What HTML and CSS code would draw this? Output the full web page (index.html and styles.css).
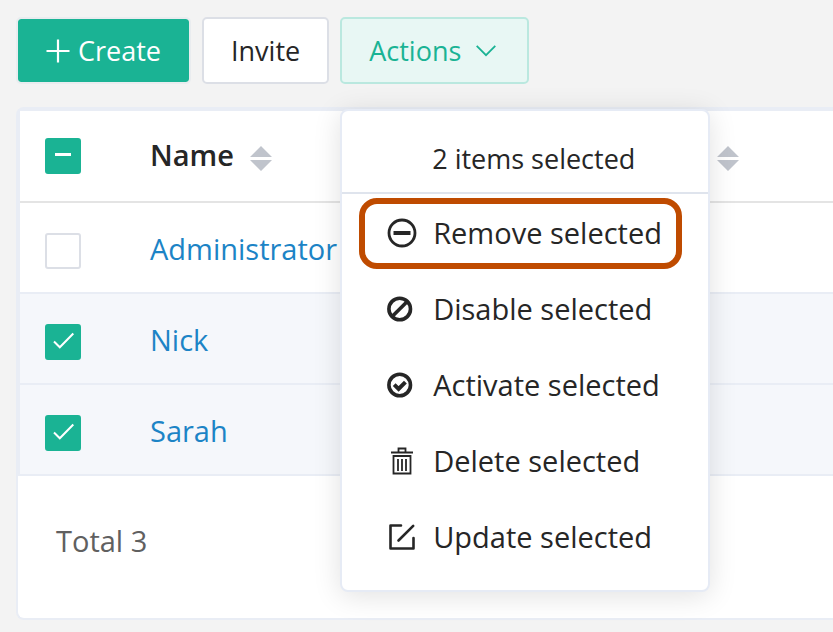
FILE: index.html
```html
<!DOCTYPE html>
<html lang="en">
<head>
<meta charset="utf-8">
<title>Users</title>
<link rel="stylesheet" href="styles.css">
</head>
<body>
<main class="page">
  <div class="toolbar">
    <button type="button" class="btn btn-primary">
      <svg width="24" height="24" viewBox="0 0 24 24" aria-hidden="true"><path d="M12 0.500V23.500M0.500 12H23.500" fill="none" stroke="currentColor" stroke-width="2.200"/></svg>
      Create
    </button>
    <button type="button" class="btn">Invite</button>
    <div class="dropdown">
      <button type="button" class="btn btn-active" aria-expanded="true">
        Actions
        <svg class="chevron" width="20" height="12" viewBox="0 0 20 12" aria-hidden="true"><path d="M.7.900 10 10.200 19.300.900" fill="none" stroke="currentColor" stroke-width="1.800"/></svg>
      </button>
      <div class="menu">
        <p class="menu-title">2 items selected</p>
        <ul class="menu-list">
          <li><button type="button" class="menu-item menu-item-marked">
            <svg class="icon" viewBox="0 0 30 30" aria-hidden="true"><circle cx="15" cy="15" r="13" fill="none" stroke="currentColor" stroke-width="2.800"/><path d="M6.500 15h17" stroke="currentColor" stroke-width="4"/></svg>
            Remove selected
          </button></li>
          <li><button type="button" class="menu-item">
            <svg class="icon" viewBox="0 0 30 30" aria-hidden="true"><circle cx="12.700" cy="15" r="10.800" fill="none" stroke="currentColor" stroke-width="3.600"/><path d="M5.400 22.300 20 7.700" stroke="currentColor" stroke-width="3.600"/></svg>
            Disable selected
          </button></li>
          <li><button type="button" class="menu-item">
            <svg class="icon" viewBox="0 0 30 30" aria-hidden="true"><circle cx="12.700" cy="15" r="10.800" fill="none" stroke="currentColor" stroke-width="3.600"/><path d="m7.200 14.600 4.400 4.300 6.800-6.800" fill="none" stroke="currentColor" stroke-width="4"/></svg>
            Activate selected
          </button></li>
          <li><button type="button" class="menu-item">
            <svg class="icon" viewBox="0 0 30 30" aria-hidden="true"><path d="M4 6.500h22M11.500 6V2.500h7V6M6.500 10h17v17.500h-17zM11 13v12M15 13v12M19 13v12" fill="none" stroke="currentColor" stroke-width="1.800"/></svg>
            Delete selected
          </button></li>
          <li><button type="button" class="menu-item">
            <svg class="icon" viewBox="0 0 30 30" aria-hidden="true"><path d="M14 3.500H3.500v23h23V16M11.500 18.500 26.200 3.800" fill="none" stroke="currentColor" stroke-width="2.600" stroke-linecap="round" stroke-linejoin="round"/></svg>
            Update selected
          </button></li>
        </ul>
      </div>
    </div>
  </div>

  <section class="card">
    <table class="table">
      <thead>
        <tr>
          <th class="col-check"><input type="checkbox" class="check check-mixed" aria-label="Select all"></th>
          <th class="col-name"><button type="button" class="sort">Name <svg width="22" height="25" viewBox="0 0 22 25" aria-hidden="true"><path d="M11 0 22 11H0zM0 14h22L11 25z" fill="#c0c4cc"/></svg></button></th>
          <th><button type="button" class="sort" aria-label="Sort"><svg width="22" height="25" viewBox="0 0 22 25" aria-hidden="true"><path d="M11 0 22 11H0zM0 14h22L11 25z" fill="#c0c4cc"/></svg></button></th>
        </tr>
      </thead>
      <tbody>
        <tr>
          <td><input type="checkbox" class="check" aria-label="Select Administrator"></td>
          <td><a href="#administrator">Administrator</a></td>
          <td></td>
        </tr>
        <tr class="selected">
          <td><input type="checkbox" class="check" checked aria-label="Select Nick"></td>
          <td><a href="#nick">Nick</a></td>
          <td></td>
        </tr>
        <tr class="selected">
          <td><input type="checkbox" class="check" checked aria-label="Select Sarah"></td>
          <td><a href="#sarah">Sarah</a></td>
          <td></td>
        </tr>
      </tbody>
    </table>
    <footer class="total">Total 3</footer>
  </section>
</main>
</body>
</html>
```

FILE: styles.css
```css
* {
  box-sizing: border-box;
}

body {
  margin: 0;
  background: #f3f3f3;
  color: #262626;
  font-family: "Open Sans", sans-serif;
  font-size: 29px;
  line-height: 40px;
}

button {
  font: inherit;
  color: inherit;
  cursor: pointer;
}

.page {
  padding: 17px 0 12px 16px;
}

.toolbar {
  display: flex;
  gap: 11px;
  margin-bottom: 23px;
}

.btn {
  display: flex;
  align-items: center;
  gap: 8px;
  padding: 12px 27px;
  border: 2px solid #dcdfe6;
  border-radius: 5px;
  background: #fff;
  font-size: 27px;
  line-height: 39px;
  min-height: 67px;
}

.btn-primary {
  padding: 12px 28px;
  border-color: #e9ecef;
  background: #1ab394;
  background-clip: padding-box;
  color: #fff;
}

.btn-active {
  gap: 15px;
  padding-right: 31px;
  border-color: #bae8df;
  background: #e8f7f4;
  color: #1ab394;
}

.dropdown {
  position: relative;
}

.menu {
  position: absolute;
  z-index: 1;
  top: 100%;
  left: 0;
  margin-top: 25px;
  border: 2px solid #e6ebf5;
  border-radius: 8px;
  background: #fff;
  box-shadow: 0 4px 28px rgba(0, 0, 0, 0.12);
  white-space: nowrap;
}

.menu-title {
  margin: 0;
  padding: 28px 27px 13px 90px;
  border-bottom: 2px solid #dfe4ed;
  font-size: 27px;
}

.menu-list {
  display: grid;
  gap: 5px;
  margin: 0;
  padding: 4px 26px 17px 17px;
  list-style: none;
}

.menu-item {
  display: flex;
  align-items: center;
  gap: 16px;
  width: 100%;
  min-height: 71px;
  padding: 0 14px 2px 22px;
  border: 6px solid transparent;
  border-radius: 18px;
  background: none;
}

.menu-item-marked {
  border-color: #bf4b00;
}

.icon {
  flex: none;
  width: 30px;
  height: 30px;
}

.card {
  border: 2px solid #e9edf5;
  border-right: 0;
  border-radius: 8px 0 0 8px;
  background: #fff;
}

.table {
  width: 100%;
  border: 2px solid #e9edf5;
  border-width: 2px 0 0 2px;
  border-spacing: 0;
  table-layout: fixed;
}

.table th,
.table td {
  height: 91px;
  padding: 2px 0 0;
  border-bottom: 2px solid #e9edf5;
  text-align: left;
  font-weight: 400;
}

.table th {
  height: 92px;
  padding: 0;
  border-color: #e4e4e4;
}

.table .col-check {
  width: 130px;
}

.table .col-name {
  width: 567px;
}

.table a {
  color: #1c84c6;
  text-decoration: none;
}

.selected {
  background: #f5f7fb;
}

.check {
  appearance: none;
  display: block;
  width: 36px;
  height: 36px;
  margin: 0 0 0 25px;
  border: 2px solid #dcdfe6;
  border-radius: 3px;
  background: #fff center / 36px 36px no-repeat;
}

td .check {
  margin-top: 4px;
}

.check:checked,
.check-mixed {
  border-color: #1ab394;
  background-color: #1ab394;
}

.check:checked {
  background-image: url("data:image/svg+xml,%3Csvg xmlns='http://www.w3.org/2000/svg' viewBox='0 0 36 36'%3E%3Cpath d='M9 17.500 14.800 23.300 28.300 9.500' fill='none' stroke='white' stroke-width='2'/%3E%3C/svg%3E");
}

.check-mixed {
  background-image: linear-gradient(#fff, #fff);
  background-position: center 13px;
  background-size: 16px 3px;
}

.sort {
  display: flex;
  align-items: center;
  gap: 16px;
  padding: 0 0 2px;
  border: 0;
  background: none;
  font-weight: 600;
}

.sort svg {
  margin-top: 7px;
}

.total {
  padding: 45px 38px 57px;
  color: #606060;
}
```
